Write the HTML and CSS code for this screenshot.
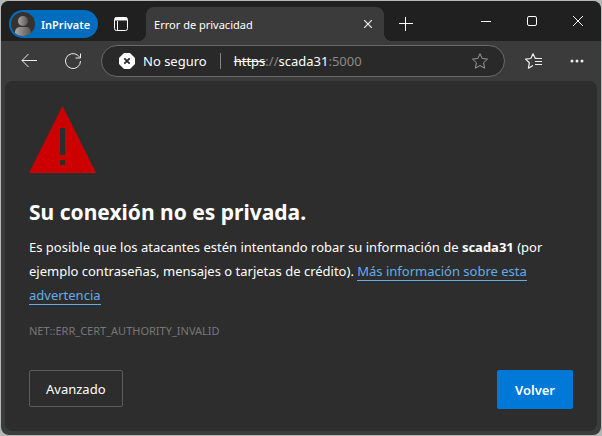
FILE: index.html
```html
<!DOCTYPE html>
<html lang="es">
  <head>
    <meta charset="utf-8">
    <title>Error de privacidad</title>
    <link rel="stylesheet" href="styles.css">
  </head>
  <body>
    <div class="window">
      <header class="titlebar">
        <button type="button" class="profile">
          <svg class="avatar" width="24" height="24" viewBox="0 0 24 24">
            <defs>
              <linearGradient id="shade">
                <stop offset="0" stop-color="#aaa6a3"/>
                <stop offset="1" stop-color="#585553"/>
              </linearGradient>
              <clipPath id="round"><circle cx="12" cy="12" r="12"/></clipPath>
            </defs>
            <circle cx="12" cy="12" r="12" fill="#35322f"/>
            <g clip-path="url(#round)" fill="url(#shade)">
              <circle cx="12" cy="9" r="5"/>
              <path d="M4 24v-4a5 5 0 0 1 5-5h6a5 5 0 0 1 5 5v4z"/>
            </g>
          </svg>
          InPrivate
        </button>
        <button type="button" class="tab-actions" aria-label="Menú de acciones de pestaña">
          <svg width="14" height="14" viewBox="0 0 14 14" fill="none" stroke="#fff">
            <rect x=".5" y=".5" width="13" height="13" rx="2"/>
            <path d="M1 2h12" stroke-width="3"/>
            <path d="M3.500 4v9"/>
          </svg>
        </button>
        <div class="tab">
          <span class="tab-title">Error de privacidad</span>
          <button type="button" class="tab-close" aria-label="Cerrar pestaña">
            <svg width="8" height="8" viewBox="0 0 8 8" stroke="#eee" stroke-width="1.2">
              <path d="M0 0l8 8M8 0l-8 8"/>
            </svg>
          </button>
        </div>
        <button type="button" class="new-tab" aria-label="Nueva pestaña">
          <svg width="14" height="14" viewBox="0 0 14 14" stroke="#fff">
            <path d="M6.500 0v14M0 6.500h14"/>
          </svg>
        </button>
        <div class="window-controls">
          <button type="button" aria-label="Minimizar">
            <svg width="10" height="10" viewBox="0 0 10 10" stroke="#fff"><path d="M0 5.500h10"/></svg>
          </button>
          <button type="button" aria-label="Maximizar">
            <svg width="10" height="10" viewBox="0 0 10 10" fill="none" stroke="#fff">
              <rect x=".5" y=".5" width="9" height="9" rx="1.500"/>
            </svg>
          </button>
          <button type="button" aria-label="Cerrar">
            <svg width="10" height="10" viewBox="0 0 10 10" stroke="#fff"><path d="M0 0l10 10M10 0L0 10"/></svg>
          </button>
        </div>
      </header>

      <nav class="toolbar">
        <button type="button" class="tool" aria-label="Atrás">
          <svg width="16" height="14" viewBox="0 0 16 14" fill="none" stroke="#eee">
            <path d="M16 6.500H1M7.500 0L1 6.500 7.500 13"/>
          </svg>
        </button>
        <button type="button" class="tool" aria-label="Actualizar">
          <svg width="16" height="16" viewBox="0 0 16 16" fill="none" stroke="#eee">
            <path d="M15.500 8A7.500 7.500 0 1 1 12.800 2.300L15 4.500M15.500 .5v4.500h-5"/>
          </svg>
        </button>
        <div class="address-bar">
          <button type="button" class="security">
            <svg width="16" height="16" viewBox="0 0 16 16">
              <path d="M5 0h6l5 5v6l-5 5H5l-5-5V5z" fill="#fff"/>
              <path d="M5.300 5.300l5.400 5.400M10.700 5.300l-5.400 5.400" stroke="#292929" stroke-width="1.800"/>
            </svg>
            No seguro
          </button>
          <div class="url">
            <input type="text" class="url-input" value="https://scada31:5000" aria-label="Barra de direcciones" spellcheck="false">
            <span class="url-text" aria-hidden="true"><s>https</s><span class="dim">://</span>scada31<span class="dim">:5000</span></span>
          </div>
          <button type="button" class="favorite" aria-label="Agregar a favoritos">
            <svg width="16" height="16" viewBox="0 0 16 16" fill="none" stroke="#999" stroke-linejoin="round">
              <path d="M8 .7l2.200 4.800 5.300.6-3.900 3.600 1 5.500L8 12.500l-4.600 2.700 1-5.500L.5 6.100l5.300-.6z"/>
            </svg>
          </button>
        </div>
        <button type="button" class="tool" aria-label="Favoritos">
          <svg width="17" height="16" viewBox="0 0 17 16" fill="none" stroke="#eee" stroke-width="1.2" stroke-linejoin="round">
            <path d="M12 5.500l-1.800-.3L8 .7 5.800 5.500l-5.300.6 3.900 3.600-1 5.500L8 12.500"/>
            <path d="M10 5.500h7M10 8.500h7M10 11.500h7"/>
          </svg>
        </button>
        <button type="button" class="tool" aria-label="Configuración y más">
          <svg width="14" height="4" viewBox="0 0 14 4" fill="#eee">
            <circle cx="2" cy="2" r="1.500"/><circle cx="7" cy="2" r="1.500"/><circle cx="12" cy="2" r="1.500"/>
          </svg>
        </button>
      </nav>

      <main class="page">
        <svg class="warning" width="67" height="67" viewBox="0 0 67 67">
          <path d="M33.500 0L67 67H0z" fill="#c00"/>
          <path d="M31 22h5v27h-5zM31 54h5v5h-5z" fill="#2d2d2d"/>
        </svg>
        <h1>Su conexión no es privada.</h1>
        <p class="message">Es posible que los atacantes estén intentando robar su información de <strong>scada31</strong> (por ejemplo contraseñas, mensajes o tarjetas de crédito). <a href="#">Más información sobre esta advertencia</a></p>
        <p class="error-code">NET::ERR_CERT_AUTHORITY_INVALID</p>
        <div class="actions">
          <button type="button" class="advanced">Avanzado</button>
          <button type="button" class="back">Volver</button>
        </div>
      </main>
    </div>
  </body>
</html>
```

FILE: styles.css
```css
* {
  box-sizing: border-box;
  margin: 0;
  padding: 0;
}

body {
  background-color: #b4b8b6;
  color: white;
  display: flex;
  font-family: "Noto Sans", "Open Sans", sans-serif;
  font-size: 13px;
  min-height: 100vh;
  padding: 1px;
}

button {
  align-items: center;
  background: none;
  border: none;
  color: inherit;
  display: flex;
  font: inherit;
  justify-content: center;
}

svg {
  display: block;
  flex-shrink: 0;
}

.window {
  background-color: #3b3b3b;
  border-radius: 8px;
  display: flex;
  flex: 1;
  flex-direction: column;
  overflow: hidden;
}

/* Title bar */
.titlebar {
  align-items: center;
  background-color: #202020;
  display: flex;
  height: 40px;
  padding: 6px 0 0 8px;
}

.profile {
  background-color: #006cbe;
  border-radius: 14px;
  font-size: 11px;
  font-weight: 600;
  gap: 6px;
  height: 28px;
  padding: 0 8px 0 2px;
}

.tab-actions {
  height: 34px;
  margin: 0 8px 0 6px;
  width: 34px;
}

.tab {
  align-items: center;
  background-color: #3b3b3b;
  border-radius: 8px 8px 0 0;
  display: flex;
  flex: 0 1 238px;
  font-size: 11px;
  height: 34px;
  justify-content: space-between;
  padding: 0 4px 0 8px;
  position: relative;
}

/* Flared feet of the tab */
.tab::before,
.tab::after {
  bottom: 0;
  content: "";
  height: 8px;
  position: absolute;
  width: 8px;
}

.tab::before {
  background: radial-gradient(circle at 0 0, #202020 8px, #3b3b3b 8px);
  left: -8px;
}

.tab::after {
  background: radial-gradient(circle at 100% 0, #202020 8px, #3b3b3b 8px);
  right: -8px;
}

.tab-close {
  height: 24px;
  width: 24px;
}

.new-tab {
  height: 28px;
  margin-left: 8px;
  width: 28px;
}

.window-controls {
  align-self: flex-start;
  display: flex;
  margin-left: auto;
}

.window-controls button {
  height: 28px;
  width: 46px;
}

/* Toolbar */
.toolbar {
  align-items: center;
  display: flex;
  height: 40px;
  padding: 0 2px 0 6px;
}

.tool {
  height: 32px;
  width: 44px;
}

.address-bar {
  align-items: center;
  background-color: #292929;
  border: 1px solid #6a6a6a;
  border-radius: 16px;
  display: flex;
  flex: 1;
  height: 32px;
  margin: 0 6px;
  padding: 0 16px 0 17px;
}

.security {
  border-right: 1px solid #858585;
  gap: 8px;
  height: 16px;
  padding-right: 13px;
}

.url {
  flex: 1;
  margin-left: 13px;
  position: relative;
}

.url-input {
  background: none;
  border: none;
  color: transparent;
  display: block;
  font: inherit;
  outline: none;
  width: 100%;
}

.url-input:focus {
  color: white;
}

/* Formatted address, shown until the field is edited */
.url-text {
  left: 0;
  pointer-events: none;
  position: absolute;
  top: 0;
}

.url-input:focus + .url-text {
  visibility: hidden;
}

.dim {
  color: #8b8b8b;
}

/* Page */
.page {
  background-color: #2d2d2d;
  border-radius: 8px;
  flex: 1;
  margin: 0 4px 4px;
  padding: 25px 24px 0;
}

h1 {
  font-size: 21px;
  font-weight: 700;
  line-height: 28px;
  margin-top: 25px;
}

.message {
  line-height: 24px;
  margin-top: 9px;
}

.message a {
  border-bottom: 1px solid #63ade5;
  color: #63ade5;
  text-decoration: none;
}

.error-code {
  color: #797775;
  font-size: 11px;
  line-height: 16px;
  margin-top: 16px;
}

.actions {
  align-items: flex-start;
  display: flex;
  justify-content: space-between;
  margin-top: 31px;
}

.advanced {
  border: 1px solid #5c5c5c;
  border-radius: 2px;
  height: 37px;
  padding: 0 16px;
}

.back {
  background-color: #0078d7;
  border-radius: 2px;
  font-weight: 600;
  height: 39px;
  padding: 0 18px;
}
```
